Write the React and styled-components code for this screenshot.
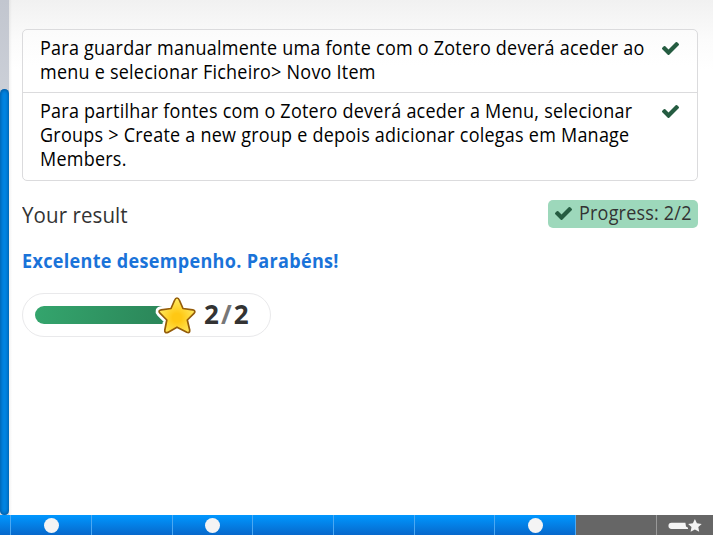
import React from 'react';
import styled, { createGlobalStyle } from 'styled-components';

const Global = createGlobalStyle`
  *, *::before, *::after { box-sizing: border-box; }
  body { margin: 0; background: #fff; font-family: "Open Sans", "Noto Sans", sans-serif; overflow: hidden; }
  svg { display: block; }
`;

const Page = styled.div`
  width: 713px;
  height: 539px;
  display: flex;
  flex-direction: column;
`;

const Body = styled.div`
  display: flex;
  height: 515px;
`;

const ScrollTrack = styled.div`
  width: 9px;
  flex: none;
  padding-top: 89px;
  background: linear-gradient(#c2c6cf, #ccd0d8 100px);
`;

const ScrollThumb = styled.div`
  height: 426px;
  border-radius: 5px;
  background: #0086e5;
  box-shadow: inset 0 0 4px rgba(0, 35, 80, 0.65);
`;

const Content = styled.main`
  flex: 1;
  padding: 29px 15px 0 13px;
  background:
    linear-gradient(90deg, rgba(0, 0, 0, 0.06), transparent 3px),
    linear-gradient(#f1f1f1, #fbfbfb 40px, #fff 70px);
`;

const Summary = styled.div`
  height: 152px;
  border: 1px solid #dbdbdd;
  border-radius: 5px;
  background: linear-gradient(#fbfbfb, #fff 35px);
`;

const SummaryRow = styled.div`
  display: flex;
  justify-content: space-between;
  height: ${(p) => p.$height}px;
  padding: 6px 18px 0 17px;
  & + & { border-top: 1px solid #dbdbdd; }
  svg { margin-top: 6px; flex: none; }
`;

const RowText = styled.div`
  width: 620px;
`;

const Narrow = styled.div`
  transform: scaleX(0.94);
  transform-origin: 0 0;
  white-space: nowrap;
`;

const Line = styled(Narrow)`
  font-size: 19.14px;
  line-height: 24px;
  letter-spacing: 0.26px;
  color: #000;
`;

const ResultHeader = styled.div`
  display: flex;
  justify-content: space-between;
  margin-top: 19px;
  height: 28px;
`;

const Heading = styled(Narrow)`
  font-size: 21.8px;
  line-height: 30px;
  letter-spacing: 0.1px;
  color: #333;
`;

const Progress = styled.div`
  display: flex;
  align-items: center;
  gap: 6.5px;
  width: 150px;
  height: 28px;
  padding: 0 0 2px 7px;
  border-radius: 5px;
  background: #9dd8bb;
  svg { flex: none; }
`;

const ProgressLabel = styled(Narrow)`
  color: #333;
  font-size: 19.14px;
  line-height: 24px;
  letter-spacing: 0.23px;
`;

const Feedback = styled(Narrow)`
  margin-top: 21px;
  font-size: 19.2px;
  line-height: 24px;
  font-weight: 700;
  letter-spacing: 0.33px;
  color: #1a73d9;
`;

const ScoreBar = styled.div`
  display: flex;
  align-items: center;
  width: 249px;
  height: 44px;
  margin-top: 20px;
  padding-left: 12px;
  border: 1px solid #e9e9eb;
  border-radius: 22px;
`;

const ScoreFill = styled.div`
  width: 129px;
  height: 18px;
  border-radius: 9px 0 0 9px;
  background: linear-gradient(100deg, #34a56d, #2b8659);
`;

const StarSlot = styled.div`
  width: 46px;
  height: 44px;
  margin: 0 0 0 -10.5px;
  flex: none;
`;

const Score = styled.div`
  display: flex;
  gap: 2px;
  margin: -2px 0 0 4.5px;
  font-size: 26px;
  line-height: 40px;
  font-weight: 700;
  color: #333;
  span { color: #777; }
`;

const Pages = styled.nav`
  display: flex;
  height: 20px;
`;

const PageCell = styled.div`
  width: ${(p) => p.$width}px;
  flex: none;
  display: flex;
  align-items: center;
  justify-content: center;
  background: ${(p) => (p.$done ? 'linear-gradient(#0097ff, #0768cb)' : '#666')};
  border-right: ${(p) => (p.$last ? '0' : '1px solid #4ba8f2')};
  ${(p) => !p.$done && !p.$last && 'border-right-color: #999;'}
`;

const Dot = styled.i`
  width: 15px;
  height: 15px;
  margin-top: 1px;
  border-radius: 50%;
  background: #f4f4f4;
`;

const Check = () => (
  <svg width="17" height="13" viewBox="121 334 1550 1188" preserveAspectRatio="none" fill="#255c41">
    <path d="M1671 566q0 40-28 68l-724 724-136 136q-28 28-68 28t-68-28l-136-136-362-362q-28-28-28-68t28-68l136-136q28-28 68-28t68 28l294 295 656-657q28-28 68-28t68 28l136 136q28 28 28 68z" />
  </svg>
);

const starPath = 'M23 5Q24.5 5 25.3 7L29 15.5L38.8 16.8Q42.2 17.8 40 20.4L33.3 27L35.7 37Q36 40.6 32.8 39.2L23 34.2L13.8 39.4Q10.4 40.4 10.8 37L12.8 27L6 20.2Q3.6 17.5 7.2 16.8L17 15.5L20.7 7Q21.5 5 23 5Z';

const Star = () => (
  <svg width="46" height="44" viewBox="0 0 46 44">
    <defs>
      <radialGradient id="gold" cx="50%" cy="57%" r="50%">
        <stop offset="0.25" stopColor="#ffc814" />
        <stop offset="1" stopColor="#ffe75a" />
      </radialGradient>
    </defs>
    <path d={starPath} fill="#fff" stroke="#fff" strokeWidth="7" strokeLinejoin="round" />
    <path d={starPath} fill="url(#gold)" stroke="#945c0a" strokeWidth="1.7" strokeLinejoin="round" />
  </svg>
);

const ResultIcon = () => (
  <svg width="34" height="14" viewBox="0 0 34 14" fill="#f4f4f4">
    <path d="M3.6 4.7H17.4L18 8.5L20 9.8V11H3.6A3.1 3.1 0 0 1 3.6 4.7Z" />
    <path d="M26.9 1L28.9 5.2L33.7 5.9L30.3 9L31.2 13.7L26.9 11.4L22.6 13.7L23.5 9L20.1 5.9L24.9 5.2Z" />
  </svg>
);

const cells = [
  { width: 11, done: true },
  { width: 81, done: true, dot: true },
  { width: 81, done: true },
  { width: 80, done: true, dot: true },
  { width: 81, done: true },
  { width: 81, done: true },
  { width: 80, done: true },
  { width: 81, done: true, dot: true },
  { width: 81 },
  { width: 56, last: true },
];

export default function App() {
  return (
    <Page>
      <Global />
      <Body>
        <ScrollTrack><ScrollThumb /></ScrollTrack>
        <Content>
          <Summary>
            <SummaryRow $height={62}>
              <RowText>
                <Line>
                  Para guardar manualmente uma fonte com o Zotero deverá aceder ao<br />
                  menu e selecionar Ficheiro&gt; Novo Item
                </Line>
              </RowText>
              <Check />
            </SummaryRow>
            <SummaryRow $height={88}>
              <RowText>
                <Line>
                  Para partilhar fontes com o Zotero deverá aceder a Menu, selecionar<br />
                  Groups &gt; Create a new group e depois adicionar colegas em Manage<br />
                  Members.
                </Line>
              </RowText>
              <Check />
            </SummaryRow>
          </Summary>
          <ResultHeader>
            <Heading>Your result</Heading>
            <Progress><Check /><ProgressLabel>Progress: 2/2</ProgressLabel></Progress>
          </ResultHeader>
          <Feedback>Excelente desempenho. Parabéns!</Feedback>
          <ScoreBar>
            <ScoreFill />
            <StarSlot><Star /></StarSlot>
            <Score>2<span>/</span>2</Score>
          </ScoreBar>
        </Content>
      </Body>
      <Pages>
        {cells.map((c, i) => (
          <PageCell key={i} $width={c.width} $done={c.done} $last={c.last}>
            {c.dot && <Dot />}
            {c.last && <ResultIcon />}
          </PageCell>
        ))}
      </Pages>
    </Page>
  );
}
